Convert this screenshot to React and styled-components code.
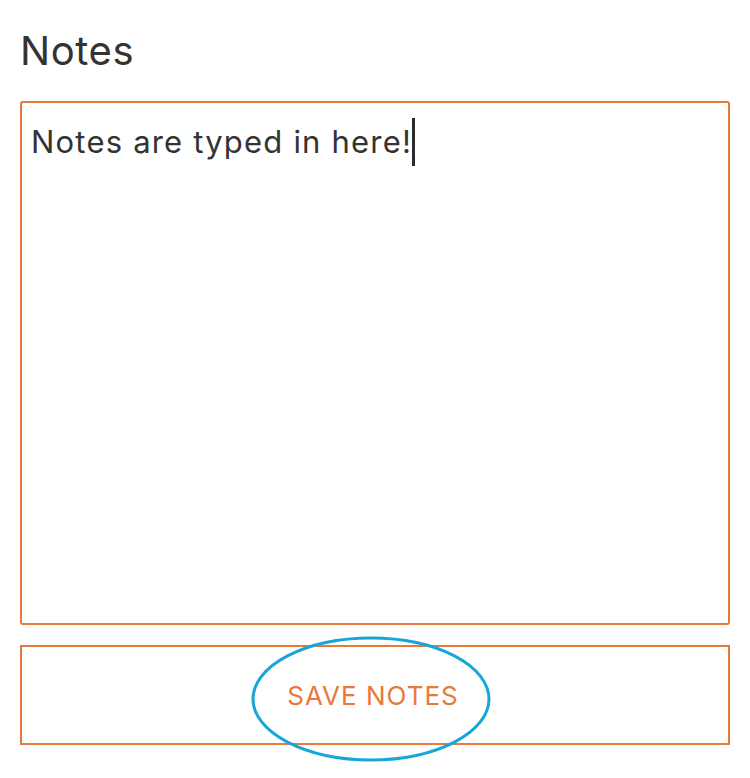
import React from "react";
import styled, { createGlobalStyle } from "styled-components";

const Global = createGlobalStyle`
  html, body { margin: 0; padding: 0; background: #fff; }
  body { font-family: Inter, "Noto Sans", sans-serif; }
`;

const Page = styled.div`
  width: 750px;
  height: 778px;
  box-sizing: border-box;
  padding: 27px 20px 0 20px;
  display: flex;
  flex-direction: column;
`;

const Title = styled.h1`
  margin: 0;
  font-size: 40px;
  font-weight: 400;
  color: #333;
  line-height: 48px;
  letter-spacing: 0.6px;
`;

const NoteBox = styled.div`
  margin-top: 26px;
  height: 524px;
  box-sizing: border-box;
  border: 2px solid #e8793a;
  border-radius: 3px;
  padding: 15px 9px;
  font-size: 31px;
  line-height: 48px;
  color: #333;
  letter-spacing: 1.2px;
`;

const Caret = styled.span`
  display: inline-block;
  width: 3px;
  height: 48px;
  background: #2b2b2b;
  vertical-align: top;
  margin-left: 0;
`;

const ButtonWrap = styled.div`
  position: relative;
  margin-top: 20px;
`;

const SaveButton = styled.button`
  width: 100%;
  height: 100px;
  box-sizing: border-box;
  background: #fff;
  border: 2px solid #e8793a;
  border-radius: 0;
  color: #e8793a;
  font-family: Inter, "Noto Sans", sans-serif;
  font-size: 26px;
  font-weight: 400;
  letter-spacing: 1px;
  padding: 0 4px 0 0;
  cursor: pointer;
`;

const Highlight = styled.svg`
  position: absolute;
  left: 230px;
  top: -10px;
  width: 244px;
  height: 128px;
  pointer-events: none;
`;

export default function App() {
  return (
    <>
      <Global />
      <Page>
        <Title>Notes</Title>
        <NoteBox>
          Notes are typed in here!<Caret />
        </NoteBox>
        <ButtonWrap>
          <SaveButton>SAVE NOTES</SaveButton>
          <Highlight viewBox="0 0 244 128">
            <ellipse cx="121" cy="64" rx="118" ry="61" fill="none" stroke="#17a6d8" strokeWidth="3" />
          </Highlight>
        </ButtonWrap>
      </Page>
    </>
  );
}
